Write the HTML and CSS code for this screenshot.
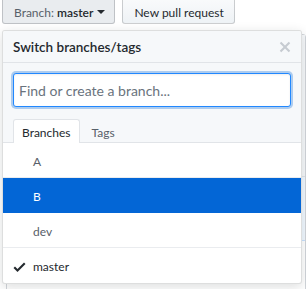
FILE: index.html
```html
<!DOCTYPE html>
<html lang="en">
<head>
  <meta charset="UTF-8" />
  <title>Switch branches</title>
  <link rel="stylesheet" href="styles.css">
</head>
<body>
  <div class="toolbar">
    <button class="btn selected">Branch: <span class="branch-name">master</span><span class="caret"></span></button>
    <button class="btn">New pull request</button>
  </div>

  <div class="page-behind">
    <div class="behind-top"></div>
    <div class="behind-commit"></div>
    <div class="behind-files"></div>
  </div>

  <div class="select-menu">
    <div class="menu-header">
      <span class="menu-title">Switch branches/tags</span>
      <svg class="close-icon" width="12" height="16" viewBox="0 0 12 16"><path d="M7.48 8l3.75 3.75-1.48 1.48L6 9.48l-3.75 3.75-1.48-1.48L4.52 8 .77 4.25l1.48-1.48L6 6.52l3.75-3.75 1.48 1.48L7.48 8z"/></svg>
    </div>
    <div class="menu-filters">
      <input type="text" class="filter-input" placeholder="Find or create a branch...">
      <div class="menu-tabs">
        <span class="tab active">Branches</span>
        <span class="tab">Tags</span>
      </div>
    </div>
    <div class="menu-list">
      <div class="menu-item"><span class="check"></span>A</div>
      <div class="menu-item navigation-focus"><span class="check"></span>B</div>
      <div class="menu-item"><span class="check"></span>dev</div>
      <div class="menu-item"><span class="check"><svg width="13" height="16" viewBox="0 0 12 16"><path d="M12 5l-8 8-4-4 1.5-1.5L4 10l6.5-6.5L12 5z"/></svg></span>master</div>
    </div>
  </div>
</body>
</html>
```

FILE: styles.css
```css
* { box-sizing: border-box; }
body {
  margin: 0;
  font-family: Lato, 'Noto Sans', sans-serif;
  color: #24292e;
  background: #fff;
  overflow: hidden;
  height: 289px;
  position: relative;
}
.toolbar {
  display: flex;
  gap: 7px;
  margin-top: -4px;
  padding-left: 2px;
}
.btn {
  height: 28px;
  padding: 4px 10px 0 11px;
  font-family: inherit;
  font-size: 12px;
  color: #24292e;
  background: linear-gradient(-180deg, #fafbfc 0%, #eff3f6 90%);
  border: 1px solid rgba(27,31,35,0.2);
  border-radius: 3px;
  display: flex;
  align-items: center;
}
.btn.selected {
  background: #e9ecef;
  color: #586069;
  padding-right: 9px;
}
.branch-name {
  color: #24292e;
  font-weight: 600;
  margin-left: 3px;
}
.caret {
  margin-left: 4px;
  border-top: 4px solid #24292e;
  border-left: 4px solid transparent;
  border-right: 4px solid transparent;
}

/* content that the dropdown covers */
.page-behind {
  margin-top: 10px;
  margin-left: 6px;
  border: 1px solid #d1d5da;
  border-radius: 3px;
}
.behind-top { height: 142px; background: #f6f8fa; border-bottom: 1px solid #e1e4e8; }
.behind-commit { height: 64px; background: #f1f8ff; border-bottom: 1px solid #c8e1ff; }
.behind-files { height: 60px; background: #fff; }

.select-menu {
  position: absolute;
  top: 30px;
  left: 2px;
  width: 300px;
  background: #fff;
  border: 1px solid rgba(27,31,35,0.15);
  border-radius: 3px;
  box-shadow: 0 3px 12px rgba(27,31,35,0.15);
  overflow: hidden;
}
.menu-header {
  display: flex;
  justify-content: space-between;
  align-items: center;
  height: 32px;
  padding: 0 10px;
  background: #f6f8fa;
  border-bottom: 1px solid #e1e4e8;
}
.menu-title {
  font-size: 13.5px;
  font-weight: 600;
}
.close-icon { fill: #c6cbd1; }
.menu-filters {
  background: #f6f8fa;
  padding: 10px 10px 0;
}
.filter-input {
  display: block;
  width: 100%;
  height: 34px;
  padding: 6px 5px;
  font-family: inherit;
  font-size: 14px;
  border: 1px solid #2188ff;
  border-radius: 3px;
  outline: none;
  box-shadow: inset 0 1px 2px rgba(27,31,35,0.075), 0 0 0 2px rgba(3,102,214,0.3);
}
.filter-input::placeholder { color: #6a737d; }
.menu-tabs {
  display: flex;
  margin: 12px -10px 0;
  padding: 0 10px;
  border-bottom: 1px solid #e1e4e8;
}
.tab {
  height: 24px;
  line-height: 24px;
  padding: 1px 8px 0;
  font-size: 12px;
  color: #586069;
  border: 1px solid transparent;
  border-bottom: 0;
  border-radius: 3px 3px 0 0;
  margin-bottom: -1px;
}
.tab.active {
  color: #24292e;
  background: #fff;
  border-color: #e1e4e8;
}
.tab + .tab { margin-left: 3px; }
.menu-item {
  display: flex;
  align-items: center;
  height: 35px;
  padding: 2px 8px 0 10px;
  font-size: 12px;
  color: #586069;
  border-bottom: 1px solid #eaecef;
}
.menu-item:last-child { border-bottom: 0; color: #24292e; }
.menu-item.navigation-focus {
  background: #0366d6;
  color: #fff;
  border-bottom-color: #0366d6;
}
.check {
  width: 20px;
  display: flex;
}
.check svg { fill: #24292e; }
```
